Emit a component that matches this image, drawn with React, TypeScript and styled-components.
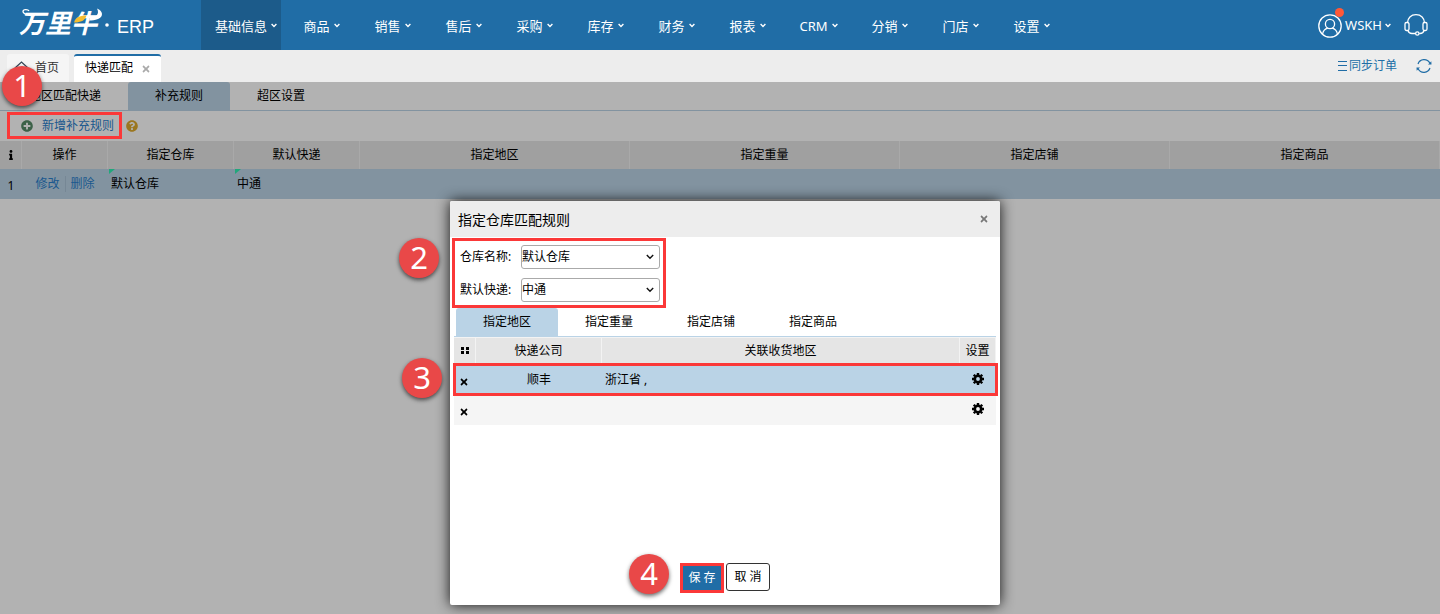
import React from "react";
import styled, { createGlobalStyle } from "styled-components";
import { FaInfo, FaPlusCircle, FaQuestionCircle, FaTimes } from "react-icons/fa";

const blue = "#206da6";
const paleBlue = "#bad3e6";
const alertRed = "#fb3838";

const GlobalStyle = createGlobalStyle`
  *, *::before, *::after { box-sizing: border-box; }
  body {
    margin: 0;
    color: #000;
    background: #fff;
    font: 12px/16px "Noto Sans", "Noto Sans CJK SC", sans-serif;
  }
  button, select { font: inherit; color: inherit; }
  button { padding: 0; border: 0; background: none; cursor: pointer; }
  a { color: inherit; text-decoration: none; }
  svg { display: block; flex: none; }
`;

const Page = styled.div`
  position: relative;
  display: flex;
  flex-direction: column;
  min-height: 100vh;
  overflow: hidden;
`;

/* Top bar */
const Header = styled.header`
  display: flex;
  align-items: center;
  height: 50px;
  color: #fff;
  background: ${blue};
`;

const Brand = styled.a`
  display: flex;
  align-items: center;
  width: 201px;
  padding-left: 18px;
`;

const Product = styled.span`
  margin: 3px 0 0 8px;
  font: 18px/24px "Liberation Sans", sans-serif;
`;

const Nav = styled.nav`
  display: flex;
  flex: 1;
  height: 50px;
`;

const NavItem = styled.a<{ $active?: boolean }>`
  display: flex;
  align-items: center;
  justify-content: center;
  min-width: 71px;
  padding: 2px 14px 0;
  font-size: 13px;
  background: ${(p) => (p.$active ? "#1c5b8a" : "transparent")};

  svg { margin: -2px -10px 0 4px; }
`;

const Account = styled.button`
  position: relative;
  display: flex;
  align-items: center;
  gap: 3px;
  margin-right: 13px;
  padding-top: 2px;
  font-size: 13px;
  line-height: 20px;

  svg:last-child { margin-top: -2px; }
`;

const AccountName = styled.span`
  padding-bottom: 3px;
`;

const Unread = styled.span`
  position: absolute;
  top: -4px;
  left: 17px;
  width: 9px;
  height: 9px;
  border-radius: 50%;
  background: #ff5837;
`;

const IconButton = styled.button`
  display: flex;
  margin-right: 12px;
`;

/* Open page tabs */
const PageTabs = styled.div`
  display: flex;
  align-items: flex-end;
  gap: 5px;
  height: 32px;
  padding-left: 7px;
  color: ${blue};
  background: #ededed;
`;

const PageTab = styled.div<{ $active?: boolean }>`
  display: flex;
  align-items: center;
  gap: ${(p) => (p.$active ? "8px" : "6px")};
  height: 28px;
  padding: 0 10px 2px ${(p) => (p.$active ? "11px" : "7px")};
  color: ${(p) => (p.$active ? "#000" : "#333")};
  background: ${(p) => (p.$active ? "#fff" : "#f5f5f5")};
  border-top: 2px solid ${(p) => (p.$active ? blue : "#f5f5f5")};
  border-radius: 3px 3px 0 0;

  button { padding-top: 2px; color: #aaa; }
`;

const PageTools = styled.div`
  display: flex;
  align-items: center;
  align-self: center;
  gap: 19px;
  margin-left: auto;
  padding-right: 8px;
`;

const SyncLink = styled.a`
  display: flex;
  align-items: center;
  gap: 2px;
`;

/* Work area */
const Workspace = styled.main`
  position: relative;
  flex: 1;
`;

const Tabs = styled.div<{ $inset: number }>`
  display: flex;
  height: 29px;
  padding-left: ${(p) => p.$inset}px;
  border-bottom: 1px solid ${paleBlue};
`;

const Tab = styled.button<{ $active?: boolean }>`
  padding: 0 27px;
  border-radius: 3px 3px 0 0;
  background: ${(p) => (p.$active ? paleBlue : "transparent")};
`;

const Toolbar = styled.div`
  display: flex;
  align-items: center;
  gap: 4px;
  height: 30px;
  padding-left: 7px;
`;

const AddRule = styled.button`
  display: flex;
  align-items: center;
  gap: 9px;
  height: 26px;
  padding: 0 8px 0 14px;
  color: #2a80cc;
`;

const Help = styled.button`
  color: #dfab2e;
`;

const Grid = styled.table`
  width: 100%;
  table-layout: fixed;
  border-collapse: separate;
  border-spacing: 0;

  th, td { padding: 0; font-weight: 400; }
  th {
    height: 28px;
    background: #e5e5e5;
    border-right: 1px solid #f3f3f3;
  }
  th svg { margin: 0 auto; }
`;

const Row = styled.tr<{ $selected?: boolean }>`
  background: ${(p) => (p.$selected ? paleBlue : "#f5f5f5")};

  td { height: 30px; }
`;

const Value = styled.td`
  position: relative;
  text-indent: 3px;
`;

const EditedMark = styled.svg`
  position: absolute;
  top: 0;
  left: 1px;
`;

const RowNumber = styled.td`
  padding-top: 4px !important;
  text-align: center;
`;

const RowLinks = styled.div`
  display: flex;
  justify-content: center;
  gap: 5px;
  color: #2a80cc;

  a + a { padding-left: 5px; border-left: 1px solid #a9c2d6; }
`;

/* Dialog */
const Overlay = styled.div`
  position: absolute;
  inset: 0;
  display: flex;
  align-items: flex-start;
  justify-content: center;
  padding: 119px 0 9px 10px;
  background: rgba(0, 0, 0, 0.3);
`;

const Dialog = styled.section`
  position: relative;
  display: flex;
  flex-direction: column;
  width: 550px;
  min-height: 404px;
  background: #fff;
  border-radius: 2px;
  box-shadow: 0 0 14px rgba(0, 0, 0, 0.9);
`;

const DialogHeader = styled.header`
  display: flex;
  align-items: center;
  justify-content: space-between;
  height: 36px;
  padding: 0 11px 0 8px;
  background: #ededed;
  border-radius: 2px 2px 0 0;

  h2 { margin: 2px 0 0; font-size: 14px; font-weight: 400; }
  button { color: #777; }
`;

const Form = styled.form`
  display: grid;
  gap: 9px;
  align-self: flex-start;
  margin: 1px 0 0 2px;
  padding: 4px 3px 3px 5px;
  border: 3px solid ${alertRed};
`;

const Field = styled.div`
  display: flex;
  align-items: center;

  label { width: 61px; }
`;

const SelectBox = styled.div`
  display: grid;
  align-items: center;

  select {
    grid-area: 1 / 1;
    width: 139px;
    height: 24px;
    padding: 0 20px 0 0;
    appearance: none;
    background: #fff;
    border: 1px solid #aaa;
    border-radius: 3px;
  }
  svg {
    grid-area: 1 / 1;
    justify-self: end;
    margin-right: 6px;
    pointer-events: none;
  }
`;

const Rules = styled.div`
  flex: 1;
  padding: 0 4px;
`;

const RuleGrid = styled(Grid)`
  th { border-top: 1px solid #f3f3f3; padding-bottom: 2px; }
`;

const RuleRow = styled(Row)<{ $marked?: boolean }>`
  position: relative;
  z-index: ${(p) => (p.$marked ? 1 : 0)};

  td { border-top: 1px solid #fff; padding-bottom: 2px; text-align: center; }
  td svg { margin: 0 auto; }
  td:nth-child(3) { text-align: left; padding-left: 3px; }
  td:first-child { padding: 5px 2px 0 0; }
  td:last-child { padding-bottom: 0; }

  td:first-child::after {
    content: "";
    display: ${(p) => (p.$marked ? "block" : "none")};
    position: absolute;
    inset: -2px -2px -1px -1px;
    border: 3px solid ${alertRed};
    pointer-events: none;
  }
`;

const DialogFooter = styled.footer`
  display: flex;
  justify-content: center;
  gap: 2px;
  padding-bottom: 12px;
`;

const Action = styled.button<{ $primary?: boolean }>`
  width: 44px;
  height: ${(p) => (p.$primary ? "30px" : "28px")};
  color: ${(p) => (p.$primary ? "#fff" : "#000")};
  background: ${(p) => (p.$primary ? blue : "#fff")};
  border: ${(p) => (p.$primary ? `3px solid ${alertRed}` : "1px solid #333")};
  border-radius: ${(p) => (p.$primary ? "0" : "3px")};
`;

/* Tutorial markers that float over the page */
const Marker = styled.span<{ $x: number; $y: number }>`
  position: absolute;
  left: ${(p) => p.$x}px;
  top: ${(p) => p.$y}px;
  width: 40px;
  height: 40px;
  border-radius: 50%;
  color: #fff;
  background: #e94848;
  box-shadow: 0 2px 4px rgba(0, 0, 0, 0.6);
  font-size: 31px;
  line-height: 38px;
  text-align: center;
`;

const Outline = styled.div`
  border: 3px solid ${alertRed};
  position: absolute;
  left: 7px;
  top: 30px;
  width: 115px;
  height: 27px;
  pointer-events: none;
`;

const Caret = () => (
  <svg width="6" height="5" viewBox="0 0 6 5" fill="none" stroke="#fff" strokeWidth="1.4">
    <path d="M.6 1 3 3.4 5.4 1" />
  </svg>
);

const SelectArrow = () => (
  <svg width="8" height="6" viewBox="0 0 8 6" fill="none" stroke="#111" strokeWidth="1.4">
    <path d="M.8 1 4 4.2 7.2 1" />
  </svg>
);

const Logo = () => (
  <svg width="87" height="46" viewBox="0 0 87 46" role="img" aria-label="万里牛">
    <text
      x="1"
      y="31"
      fill="#fff"
      fontFamily="'Noto Sans CJK SC', sans-serif"
      fontSize="26"
      fontWeight="700"
      fontStyle="italic"
    >
      万里牛
    </text>
    <path d="M17 13.500C11 14 5 12 5 9.500 5 7 10 7 11 9" fill="none" stroke="#fff" strokeWidth="1.3" />
    <path d="M79 6.500c6 2.500 7 8 1 10.500-3 1.200-6 1.500-9 1.500l1-2.500c6-.5 10-4 7-9.500Z" fill="#fff" />
    <path d="M56 20.500c1.500-5 5-7 12.500-7-1.500 5-5.500 7-12.500 7Z" fill="#f5bd2f" />
  </svg>
);

const UserIcon = () => (
  <svg width="24" height="24" viewBox="0 0 24 24" fill="none" stroke="#fff" strokeWidth="1.3">
    <circle cx="12" cy="12" r="11.2" />
    <circle cx="12" cy="10" r="4.6" />
    <path d="M4.600 20c.7-4 3.400-5.500 5.200-5.900M19.400 20c-.7-4-3.400-5.500-5.200-5.900" />
  </svg>
);

const Headset = () => (
  <svg width="24" height="24" viewBox="0 0 24 24" fill="none" stroke="#fff" strokeWidth="1.3">
    <path d="M3.500 10C3.500 5 7 1.700 12 1.700S20.500 5 20.500 10" />
    <rect x="1" y="9.500" width="4" height="8" rx="1.5" />
    <rect x="19" y="9.500" width="4" height="8" rx="1.5" />
    <path d="M4 17.500c.5 2 2 3 4 3h3.500M20 17.500c-.5 2-2 3-4 3h-.8" />
    <circle cx="13.300" cy="20.500" r="1.7" />
  </svg>
);

const HomeIcon = () => (
  <svg width="15" height="14" viewBox="0 0 15 14" fill="none" stroke="#345" strokeWidth="1.2">
    <path d="M1 7 7.500 1 14 7M3 6v7h9V6" />
  </svg>
);

const ListIcon = () => (
  <svg width="9" height="10" viewBox="0 0 9 10" stroke={blue}>
    <path d="M0 .5h9M0 4.500h9M0 9.500h9" />
  </svg>
);

const Refresh = () => (
  <svg width="16" height="16" viewBox="0 0 16 16" fill="none" stroke={blue} strokeWidth="1.2">
    <path d="M2 6A6.500 6.500 0 0 1 13.800 5M14 10A6.500 6.500 0 0 1 2.200 11" />
    <path d="M12 6.500 15.500 6.500 15.300 3.200zM4 9.500.5 9.500.7 12.800z" fill={blue} stroke="none" />
  </svg>
);

const Gear = () => (
  <svg width="12" height="12" viewBox="0 0 12 12" fill="none" stroke="#000">
    <circle cx="6" cy="6" r="3.2" strokeWidth="2.6" />
    <path
      d="M6 0v2M6 10v2M0 6h2M10 6h2M1.760 1.760l1.400 1.400M8.840 8.840l1.400 1.400M1.760 10.240l1.400-1.400M8.840 3.160l1.400-1.400"
      strokeWidth="2.4"
    />
  </svg>
);

const Dots = () => (
  <svg width="8" height="7" viewBox="0 0 8 7">
    <path d="M0 0h3v3H0zM5 0h3v3H5zM0 4h3v3H0zM5 4h3v3H5z" />
  </svg>
);

const Edited = () => (
  <EditedMark width="6" height="5" viewBox="0 0 6 5">
    <path d="M0 0h6L0 5z" fill="#30f0b0" />
  </EditedMark>
);

const menu = ["基础信息", "商品", "销售", "售后", "采购", "库存", "财务", "报表", "CRM", "分销", "门店", "设置"];
const ruleTabs = ["指定地区", "指定重量", "指定店铺", "指定商品"];
const rules = [
  { company: "顺丰", region: "浙江省 ," },
  { company: "", region: "" },
];

export default function App() {
  return (
    <Page>
      <GlobalStyle />
      <Header>
        <Brand href="#">
          <Logo />
          <svg width="4" height="4" viewBox="0 0 4 4">
            <circle cx="2" cy="2" r="1.8" fill="#fff" />
          </svg>
          <Product>ERP</Product>
        </Brand>
        <Nav>
          {menu.map((name, i) => (
            <NavItem key={name} href="#" $active={i === 0}>
              {name}
              <Caret />
            </NavItem>
          ))}
        </Nav>
        <Account>
          <UserIcon />
          <Unread />
          <AccountName>WSKH</AccountName>
          <Caret />
        </Account>
        <IconButton aria-label="客服">
          <Headset />
        </IconButton>
      </Header>

      <PageTabs>
        <PageTab>
          <HomeIcon />
          首页
        </PageTab>
        <PageTab $active>
          快递匹配
          <button aria-label="关闭">
            <FaTimes size={10} />
          </button>
        </PageTab>
        <PageTools>
          <SyncLink href="#">
            <ListIcon />
            同步订单
          </SyncLink>
          <button aria-label="刷新">
            <Refresh />
          </button>
        </PageTools>
      </PageTabs>

      <Workspace>
        <Tabs $inset={2}>
          <Tab>地区匹配快递</Tab>
          <Tab $active>补充规则</Tab>
          <Tab>超区设置</Tab>
        </Tabs>
        <Toolbar>
          <AddRule>
            <FaPlusCircle size={12} color="#568c68" />
            新增补充规则
          </AddRule>
          <Help aria-label="帮助">
            <FaQuestionCircle size={12} />
          </Help>
        </Toolbar>
        <Grid>
          <colgroup>
            <col style={{ width: 22 }} />
            <col style={{ width: 86 }} />
            <col style={{ width: 126 }} />
            <col style={{ width: 126 }} />
            <col span={4} />
          </colgroup>
          <thead>
            <tr>
              <th><FaInfo size={10} /></th>
              <th>操作</th>
              <th>指定仓库</th>
              <th>默认快递</th>
              <th>指定地区</th>
              <th>指定重量</th>
              <th>指定店铺</th>
              <th>指定商品</th>
            </tr>
          </thead>
          <tbody>
            <Row $selected>
              <RowNumber>1</RowNumber>
              <td>
                <RowLinks>
                  <a href="#">修改</a>
                  <a href="#">删除</a>
                </RowLinks>
              </td>
              <Value><Edited />默认仓库</Value>
              <Value><Edited />中通</Value>
              <td colSpan={4} />
            </Row>
          </tbody>
        </Grid>

        <Overlay>
          <Dialog role="dialog" aria-labelledby="dialog-title">
            <DialogHeader>
              <h2 id="dialog-title">指定仓库匹配规则</h2>
              <button aria-label="关闭">
                <FaTimes size={10} />
              </button>
            </DialogHeader>
            <Form>
              <Field>
                <label htmlFor="warehouse">仓库名称:</label>
                <SelectBox>
                  <select id="warehouse"><option>默认仓库</option></select>
                  <SelectArrow />
                </SelectBox>
              </Field>
              <Field>
                <label htmlFor="express">默认快递:</label>
                <SelectBox>
                  <select id="express"><option>中通</option></select>
                  <SelectArrow />
                </SelectBox>
              </Field>
            </Form>
            <Rules>
              <Tabs $inset={2}>
                {ruleTabs.map((name, i) => (
                  <Tab key={name} $active={i === 0}>{name}</Tab>
                ))}
              </Tabs>
              <RuleGrid>
                <colgroup>
                  <col style={{ width: 22 }} />
                  <col style={{ width: 126 }} />
                  <col />
                  <col style={{ width: 36 }} />
                </colgroup>
                <thead>
                  <tr>
                    <th><Dots /></th>
                    <th>快递公司</th>
                    <th>关联收货地区</th>
                    <th>设置</th>
                  </tr>
                </thead>
                <tbody>
                  {rules.map((rule, i) => (
                    <RuleRow key={i} $selected={i === 0} $marked={i === 0}>
                      <td>
                        <button aria-label="移除"><FaTimes size={10} /></button>
                      </td>
                      <td>{rule.company}</td>
                      <td>{rule.region}</td>
                      <td>
                        <button aria-label="设置"><Gear /></button>
                      </td>
                    </RuleRow>
                  ))}
                </tbody>
              </RuleGrid>
            </Rules>
            <DialogFooter>
              <Action $primary>保 存</Action>
              <Action>取 消</Action>
            </DialogFooter>
            <Marker $x={-51} $y={37}>2</Marker>
            <Marker $x={-48} $y={157}>3</Marker>
            <Marker $x={179} $y={353}>4</Marker>
          </Dialog>
        </Overlay>
        <Outline />
      </Workspace>
      <Marker $x={2} $y={66}>1</Marker>
    </Page>
  );
}
